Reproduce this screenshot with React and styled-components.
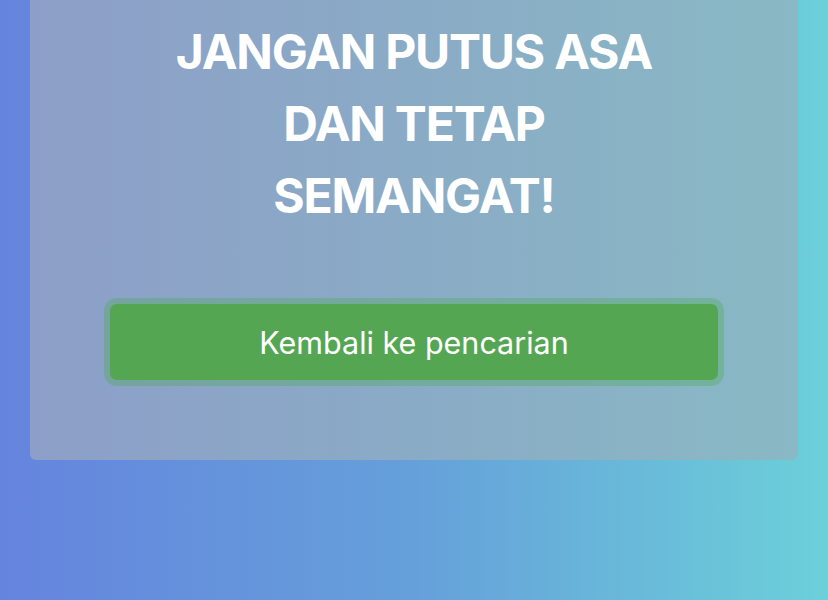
import React from "react";
import styled, { createGlobalStyle } from "styled-components";

const Global = createGlobalStyle`
  html, body { margin: 0; padding: 0; }
  body {
    min-height: 100vh;
    font-family: Inter, "Noto Sans", sans-serif;
    background: linear-gradient(to right, #6584de 0%, #65a0da 50%, #6cd0d9 100%);
  }
  #root { min-height: 100vh; }
`;

const Page = styled.div`
  min-height: 100vh;
  padding: 0 30px;
  box-sizing: border-box;
`;

const Card = styled.div`
  background: linear-gradient(to right, #8d9fc8 0%, #8aabc6 50%, #89b9c4 100%);
  border-radius: 0 0 6px 6px;
  padding: 16px 75px 80px;
  box-sizing: border-box;
  display: flex;
  flex-direction: column;
  align-items: center;
`;

const Heading = styled.h1`
  margin: 0;
  width: 520px;
  color: #fff;
  font-size: 48px;
  font-weight: 700;
  line-height: 72px;
  letter-spacing: -1.2px;
  text-align: center;
`;

const Button = styled.button`
  margin-top: 72px;
  flex-shrink: 0;
  width: 608px;
  height: 76px;
  border: none;
  border-radius: 7px;
  background: #55a652;
  color: #fff;
  font-family: Inter, "Noto Sans", sans-serif;
  font-size: 30.5px;
  font-weight: 400;
  box-shadow: 0 0 0 6px rgba(80, 170, 90, 0.38);
  cursor: pointer;
`;

export default function App() {
  return (
    <>
      <Global />
      <Page>
        <Card>
          <Heading>JANGAN PUTUS ASA DAN TETAP SEMANGAT!</Heading>
          <Button>Kembali ke pencarian</Button>
        </Card>
      </Page>
    </>
  );
}
